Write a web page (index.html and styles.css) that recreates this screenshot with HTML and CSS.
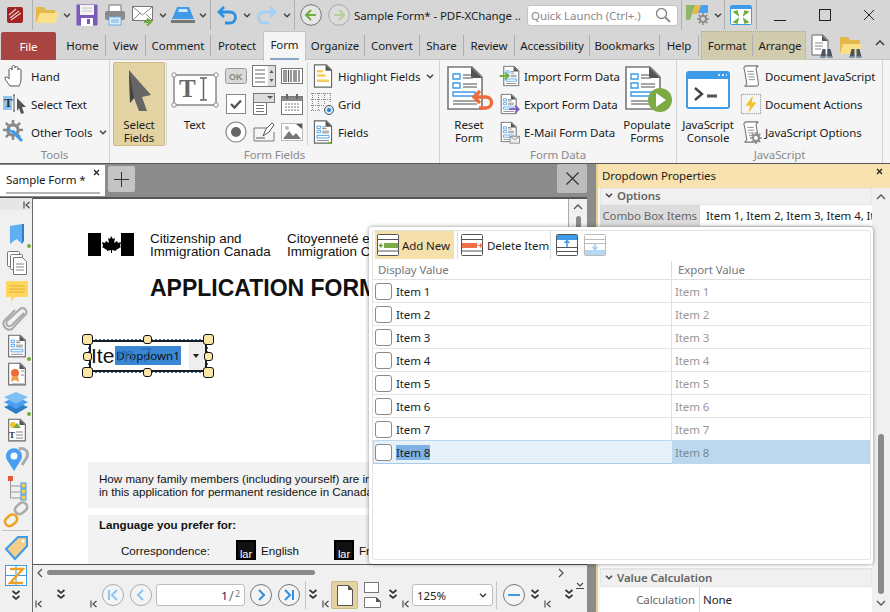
FILE: index.html
```html
<!DOCTYPE html>
<html lang="en">
<head>
    <meta charset="UTF-8">
    <title>Sample Form* - PDF-XChange Editor</title>
    <link rel="stylesheet" href="styles.css">
</head>
<body>
<svg class="defs">
    <symbol id="chev" viewBox="0 0 8 5"><path d="M1 .8 4 3.8 7 .8" fill="none" stroke="#444" stroke-width="1.5"/></symbol>
    <symbol id="dbl" viewBox="0 0 10 12"><path d="M1.5 1 5 4 8.5 1M1.5 6 5 9 8.5 6" fill="none" stroke="#333" stroke-width="1.7"/></symbol>
    <symbol id="end" viewBox="0 0 8 8"><path d="M1 .5v7M6.5 1 3 4l3.5 3" fill="none" stroke="#444" stroke-width="1.1"/></symbol>
    <symbol id="doc" viewBox="0 0 24 28"><path d="M2 1h14l6 6v20H2z" fill="#fff" stroke="#666" stroke-width="1.3"/><path d="M15 1v7h7z" fill="#555"/></symbol>
    <symbol id="form" viewBox="0 0 24 28"><use href="#doc"/><path d="M5 7h4v3H5zM5 12h4v3H5z" fill="#fff" stroke="#3d9be9"/><path d="M5 18h14v3H5z" fill="#fff" stroke="#3d9be9"/><path d="M11 8h4M11 10h5M11 13h8M11 15h8M5 24h14" stroke="#777"/></symbol>
    <symbol id="bigform" viewBox="0 0 36 44"><path d="M1 1h24l10 10v32H1z" fill="#fff" stroke="#777" stroke-width="1.6"/><path d="M24 1v11h11z" fill="#555"/><path d="M6 8h7v5H6zM6 17h7v5H6zM6 26h22v4H6z" fill="#fff" stroke="#3d9be9" stroke-width="1.4"/><path d="M16 9h8M16 12h10M16 18h14M16 21h14M6 35h24M6 38h24" stroke="#888" stroke-width="1.3"/></symbol>
    <symbol id="gear" viewBox="0 0 14 14"><circle cx="7" cy="7" r="3.6" fill="none" stroke="#8a8a8a" stroke-width="2.2"/><path d="M7 0v3M7 11v3M0 7h3M11 7h3M2 2l2 2M10 10l2 2M12 2l-2 2M4 10l-2 2" stroke="#8a8a8a" stroke-width="1.8"/></symbol>
    <symbol id="scroll" viewBox="0 0 24 26"><path d="M6 2h14c-2 1-3 3-2 6l2 12c1 3-1 4-3 4H5c2-1 3-2 2-5L5 7C4 5 4 3 6 2z" fill="#fff" stroke="#777" stroke-width="1.2"/><path d="M8 8h7M8.500 11h7M9 14h7M9.500 17h7" stroke="#888"/></symbol>
    <symbol id="binoc" viewBox="0 0 14 11"><path d="M1 10 3 2h3v8zM8 10V2h3l2 8z" fill="#4a5560"/><path d="M1 10h5M8 10h5" stroke="#7a8fa0" stroke-width="2"/></symbol>
</svg>

<div class="app">
    <!-- Title bar -->
    <div class="titlebar">
        <span class="qa-app"><svg width="16" height="16" viewBox="0 0 16 16"><rect width="16" height="16" rx="2" fill="#9e2524"/><path d="M3 11 12 4M4 13 14 6M2 8l7-6" stroke="#f3c9c9" stroke-width="1.2"/></svg></span>
        <span class="tb-sep m5"></span>
        <span class="qa"><svg width="24" height="20" viewBox="0 0 24 20"><path d="M1 18V2h8l2 3h9v13z" fill="#e4b84a"/><path d="M1 18 5 8h19l-4 10z" fill="#fbe08a"/></svg></span>
        <span class="caret"><svg width="8" height="5"><use href="#chev"/></svg></span>
        <span class="qa"><svg width="22" height="22" viewBox="0 0 22 22"><rect x=".5" y=".5" width="21" height="21" rx="1" fill="#7a5cb8" stroke="#a890d8" stroke-dasharray="1 1"/><rect x="4" y="1" width="14" height="10" fill="#f3f3f3"/><path d="M6 4h10M6 7h10" stroke="#c8c8c8"/><rect x="5" y="14" width="12" height="8" fill="#fff"/><rect x="11" y="15" width="3" height="5" fill="#7a5cb8"/></svg></span>
        <span class="qa"><svg width="22" height="22" viewBox="0 0 22 22"><rect x="5" y="1" width="12" height="7" fill="#fff" stroke="#777"/><rect x="1" y="7" width="20" height="9" rx="2" fill="#8a8a8a"/><rect x="5" y="13" width="12" height="8" fill="#dff0fb" stroke="#6aaee6"/><path d="M7 16h8M7 18h8" stroke="#6aaee6"/></svg></span>
        <span class="qa"><svg width="22" height="22" viewBox="0 0 22 22"><rect x=".5" y="2.500" width="20" height="14" fill="#fff" stroke="#777"/><path d="M1 3l9.500 8L20 3M1 16l7-7M20 16l-6-6" fill="none" stroke="#888"/><path d="M12 18h6M15 14.500l4 3.500-4 3.500" fill="none" stroke="#6fae3c" stroke-width="2"/></svg></span>
        <span class="caret"><svg width="8" height="5"><use href="#chev"/></svg></span>
        <span class="qa"><svg width="24" height="18" viewBox="0 0 24 18"><path d="M6 1h12l5 12H1z" fill="#3d9be9"/><path d="M8 3h8l1 3H7z" fill="#cfe7fb"/><rect y="14" width="24" height="3" fill="#777"/></svg></span>
        <span class="caret"><svg width="8" height="5"><use href="#chev"/></svg></span>
        <span class="tb-sep m1"></span>
        <span class="qa m2"><svg width="22" height="20" viewBox="0 0 22 20"><path d="M8 2 3 7l5 5M3 7h11a5 5 0 0 1 0 11H9" fill="none" stroke="#2f8fe0" stroke-width="2.800"/></svg></span>
        <span class="caret"><svg width="8" height="5"><use href="#chev"/></svg></span>
        <span class="qa"><svg width="22" height="20" viewBox="0 0 22 20"><path d="M14 2l5 5-5 5M19 7H8a5 5 0 0 0 0 11h5" fill="none" stroke="#a5d0f3" stroke-width="2.800"/></svg></span>
        <span class="caret"><svg width="8" height="5"><use href="#chev"/></svg></span>
        <span class="tb-sep m1"></span>
        <span class="qa m2"><svg width="22" height="22" viewBox="0 0 22 22"><circle cx="11" cy="11" r="10.300" fill="#e6e6e6" stroke="#777"/><path d="M11 6l-5 5 5 5M6 11h10" fill="none" stroke="#6fae3c" stroke-width="2"/></svg></span>
        <span class="qa"><svg width="22" height="22" viewBox="0 0 22 22"><circle cx="11" cy="11" r="10.300" fill="#dcdcdc" stroke="#aaa"/><path d="M11 6l5 5-5 5M6 11h10" fill="none" stroke="#b2d097" stroke-width="2"/></svg></span>
        <span class="doc-title">Sample Form* - PDF-XChange ..</span>
        <div class="quick">
            <span>Quick Launch (Ctrl+.)</span>
            <svg width="16" height="16" viewBox="0 0 16 16"><circle cx="6.500" cy="6.500" r="5" fill="none" stroke="#888" stroke-width="1.400"/><path d="M10 10l5 5" stroke="#888" stroke-width="1.800"/></svg>
        </div>
        <span class="tb-sep m3"></span>
        <span class="qa m2"><svg width="24" height="22" viewBox="0 0 24 22"><path d="M0 1h9L4 16H0z" fill="#8fb56a"/><path d="M9 1h6l-3 9H6z" fill="#e9b949"/><path d="M15 1h7v8H12z" fill="#4a9ff0"/><use href="#gear" x="11" y="9" width="12" height="12"/></svg></span>
        <span class="caret"><svg width="8" height="5"><use href="#chev"/></svg></span>
        <span class="tb-sep"></span>
        <span class="qa m2"><svg width="22" height="20" viewBox="0 0 22 20"><rect x=".5" y=".5" width="21" height="19" rx="1" fill="#fff" stroke="#3d9be9"/><path d="M1 1h20v3H1z" fill="#3d9be9"/><path d="M4 7l4 3-1-4zM18 7l-4 3 1-4zM4 17l4-3-1 4zM18 17l-4-3 1 4z" fill="#6fae3c" stroke="#6fae3c" stroke-width="1.500"/></svg></span>
        <span class="tb-sep m1"></span>
        <span class="win-btn"><svg width="12" height="12"><path d="M0 11.500h12" stroke="#222"/></svg></span>
        <span class="win-btn"><svg width="12" height="12"><rect x=".5" y=".5" width="11" height="11" fill="none" stroke="#222"/></svg></span>
        <span class="win-btn win-close"><svg width="12" height="12"><path d="M1 1l10 10M11 1 1 11" stroke="#222"/></svg></span>
    </div>

    <!-- Ribbon tabs -->
    <div class="tabs">
        <div class="file-tab">File</div>
        <div class="tab tab-home">Home</div>
        <div class="tab">View</div>
        <div class="tab">Comment</div>
        <div class="tab tab-plain">Protect</div>
        <div class="tab tab-active">Form</div>
        <div class="tab">Organize</div>
        <div class="tab">Convert</div>
        <div class="tab">Share</div>
        <div class="tab">Review</div>
        <div class="tab">Accessibility</div>
        <div class="tab">Bookmarks</div>
        <div class="tab">Help</div>
        <div class="context-tabs">
            <div class="tab">Format</div>
            <div class="tab tab-plain">Arrange</div>
        </div>
        <div class="tab-icon"><svg width="24" height="24" viewBox="0 0 24 24"><path d="M2 1h11l5 5v15H2z" fill="#fff" stroke="#666"/><path d="M12 1v6h6z" fill="#555"/><path d="M5 9h8M5 12h8M5 15h6" stroke="#888"/><use href="#binoc" x="9" y="13" width="15" height="11"/></svg></div>
        <div class="tab-icon"><svg width="24" height="24" viewBox="0 0 24 24"><path d="M1 20V3h8l2 3h10v14z" fill="#e4b84a"/><path d="M1 20 4 10h19l-3 10z" fill="#fbe08a"/><use href="#binoc" x="9" y="13" width="15" height="11"/></svg></div>
        <div class="tab-collapse"><svg width="10" height="6" viewBox="0 0 10 6"><path d="M1 5l4-4 4 4" fill="none" stroke="#333" stroke-width="1.400"/></svg></div>
    </div>

    <!-- Ribbon -->
    <div class="ribbon">
        <div class="group">
            <div class="group-body rb-col">
                <div class="rb-row"><svg width="24" height="24" viewBox="0 0 24 24"><path d="M7 22c-2-3-5-6-5-8 0-2 3-1 4 1V6c0-2 3-2 3 0V3c0-2 3-2 3 0v1c0-2 3-2 3 0v2c0-2 3-1 3 0v9c0 3-1 5-2 7z" fill="#fff" stroke="#555"/></svg><span>Hand</span></div>
                <div class="rb-row"><svg width="24" height="24" viewBox="0 0 24 24"><rect y="4" width="9" height="14" fill="#8cc6f2"/><text x="1" y="15" class="svg-serif">T</text><path d="M10 3h2M11 3v16M10 19h2" stroke="#555"/><path d="M14 6l9 9h-4l2 6-3 1-2-6-2 3z" fill="#555"/></svg><span>Select Text</span></div>
                <div class="rb-row"><svg width="24" height="24" viewBox="0 0 24 24"><use href="#gear" x="0" y="0" width="20" height="20"/><path d="M7 6a3 3 0 0 0 4 4l9 10-2 2L8 12a3 3 0 0 1-3-4z" fill="#3d9be9"/></svg><span>Other Tools</span><svg class="rb-caret" width="8" height="5"><use href="#chev"/></svg></div>
            </div>
            <div class="group-label">Tools</div>
        </div>
        <div class="group">
            <div class="group-body">
                <div class="select-fields">
                    <div class="big-icon"><svg width="26" height="44" viewBox="0 0 26 44"><path d="M3 1 25 26 16 28 21 42 13 42 8 29 4 34z" fill="#666"/><path d="M3 1 8 29 4 34z" fill="#444"/></svg></div>
                    <div class="big-label">Select<br>Fields</div>
                </div>
                <div class="big-btn big-text">
                    <div class="big-icon"><svg width="48" height="36" viewBox="0 0 48 36"><rect x="3" y="3" width="42" height="30" fill="#fff" stroke="#888" stroke-width="1.500"/><circle cx="3" cy="3" r="2.200" fill="#fff" stroke="#888"/><circle cx="45" cy="3" r="2.200" fill="#fff" stroke="#888"/><circle cx="3" cy="33" r="2.200" fill="#fff" stroke="#888"/><circle cx="45" cy="33" r="2.200" fill="#fff" stroke="#888"/><text x="8" y="25" class="svg-t">T</text><path d="M29 6h7M32.500 6v22M29 28h7" stroke="#666" stroke-width="1.500" fill="none"/></svg></div>
                    <div class="big-label">Text</div>
                </div>
                <div class="tool-grid">
                    <span><svg width="22" height="16" viewBox="0 0 22 16"><rect x=".5" y=".5" width="21" height="15" rx="2" fill="#d8d8d8" stroke="#999"/><text x="4" y="12" class="svg-ok">OK</text></svg></span>
                    <span><svg width="24" height="22" viewBox="0 0 24 22"><rect x=".5" y=".5" width="23" height="21" fill="#fff" stroke="#777"/><rect x="16" y="1" width="7" height="20" fill="#ddd"/><path d="M3 5h10M3 9h10M3 13h10M3 17h10" stroke="#666"/><path d="M17.500 8l2-3 2 3zM17.500 14l2 3 2-3z" fill="#555"/></svg></span>
                    <span><svg width="22" height="16" viewBox="0 0 22 16"><rect x=".5" y=".5" width="21" height="15" fill="#fff" stroke="#777"/><path d="M3 2v12M5 2v12M7.500 2v12M10 2v12M13 2v12M15 2v12M18 2v12" stroke="#555" stroke-width="1.200"/></svg></span>
                    <span><svg width="20" height="20" viewBox="0 0 20 20"><rect x=".5" y=".5" width="19" height="19" fill="#fff" stroke="#888"/><path d="M5 10l3.500 3.500L15 6.500" fill="none" stroke="#555" stroke-width="2.400"/></svg></span>
                    <span><svg width="22" height="22" viewBox="0 0 22 22"><rect x=".5" y=".5" width="21" height="9" fill="#ddd" stroke="#777"/><path d="M14 3l3 3 3-3z" fill="#555"/><rect x=".5" y="9.500" width="13" height="12" fill="#fff" stroke="#777"/><path d="M3 12.500h8M3 15.500h8M3 18.500h8" stroke="#777"/></svg></span>
                    <span><svg width="22" height="22" viewBox="0 0 22 22"><rect x=".5" y="3.500" width="21" height="18" fill="#fff" stroke="#777"/><rect x="1" y="4" width="20" height="4" fill="#888"/><path d="M6 1v5M16 1v5" stroke="#666" stroke-width="2"/><path d="M4 11h14M4 14h14M4 17h14" stroke="#777" stroke-dasharray="2 1"/></svg></span>
                    <span><svg width="22" height="22" viewBox="0 0 22 22"><circle cx="11" cy="11" r="10" fill="#fff" stroke="#888" stroke-width="1.200"/><circle cx="11" cy="11" r="5" fill="#666"/></svg></span>
                    <span><svg width="22" height="20" viewBox="0 0 22 20"><path d="M1 6h14M1 6v13h20V10" fill="none" stroke="#777"/><path d="M3 16h9" stroke="#555"/><path d="M10 14l3-7 6-6 2 2-5 7z" fill="#fff" stroke="#555"/></svg></span>
                    <span><svg width="22" height="18" viewBox="0 0 22 18"><rect x=".5" y=".5" width="21" height="17" fill="#fff" stroke="#bbb"/><path d="M2 16l6-8 4 5 3-3 5 6z" fill="#777"/><circle cx="6" cy="5" r="2" fill="#bbb"/><path d="M15 1h6v5z" fill="#555"/></svg></span>
                </div>
                <div class="rb-col fields-col">
                    <div class="rb-row"><svg width="24" height="24" viewBox="0 0 24 28"><use href="#doc"/><path d="M5 7h7v3H5zM5 12h10v3H5zM5 18h14v3H5z" fill="#f5cd5a"/></svg><span>Highlight Fields</span><svg class="rb-caret" width="8" height="5"><use href="#chev"/></svg></div>
                    <div class="rb-row"><svg width="24" height="24" viewBox="0 0 24 24"><path d="M1.500 1v17M7.500 1v17M13.500 1v12M19.500 1v10M0 1.500h20M0 7.500h20M0 13.500h14M0 18.500h9" stroke="#888" stroke-dasharray="1 1"/><circle cx="18" cy="18" r="4.500" fill="#cfe7fb" stroke="#555"/><circle cx="18" cy="18" r="2" fill="#2f7fc8"/></svg><span>Grid</span></div>
                    <div class="rb-row"><svg width="24" height="24" viewBox="0 0 24 28"><use href="#form"/><circle cx="20" cy="27" r="2" fill="#6fae3c"/></svg><span>Fields</span></div>
                </div>
            </div>
            <div class="group-label">Form Fields</div>
        </div>
        <div class="group">
            <div class="group-body">
                <div class="big-btn big-58">
                    <div class="big-icon"><svg width="48" height="48" viewBox="0 0 48 48"><use href="#bigform" width="36" height="44"/><path d="M33 25l-6 6 6 6M27 31h12a5 5 0 0 1 0 11h-7" fill="none" stroke="#f06a3c" stroke-width="3.400"/></svg></div>
                    <div class="big-label">Reset<br>Form</div>
                </div>
                <div class="rb-col data-col">
                    <div class="rb-row"><svg width="24" height="24" viewBox="0 0 24 28"><use href="#form" x="3" width="21"/><path d="M0 14h9M6 10l4 4-4 4" fill="none" stroke="#6fae3c" stroke-width="2.200"/></svg><span>Import Form Data</span></div>
                    <div class="rb-row"><svg width="24" height="24" viewBox="0 0 24 28"><use href="#form" width="21"/><path d="M11 20h11M18 16l4 4-4 4" fill="none" stroke="#7a5cb8" stroke-width="2.200"/></svg><span>Export Form Data</span></div>
                    <div class="rb-row"><svg width="24" height="24" viewBox="0 0 24 28"><use href="#form" width="21"/><rect x="12" y="19" width="11" height="8" fill="#eee" stroke="#888"/><path d="M12 19l5.500 4 5.500-4" fill="none" stroke="#888"/></svg><span>E-Mail Form Data</span></div>
                </div>
                <div class="big-btn big-58">
                    <div class="big-icon"><svg width="48" height="48" viewBox="0 0 48 48"><use href="#bigform" width="36" height="44"/><circle cx="35" cy="34" r="12" fill="#7cab45"/><path d="M31 27l10 7-10 7z" fill="#fff"/></svg></div>
                    <div class="big-label">Populate<br>Forms</div>
                </div>
            </div>
            <div class="group-label">Form Data</div>
        </div>
        <div class="group">
            <div class="group-body">
                <div class="big-btn big-62">
                    <div class="big-icon"><svg width="44" height="38" viewBox="0 0 44 38"><rect x="1" y="1" width="42" height="36" rx="2" fill="#fff" stroke="#3d9be9" stroke-width="2"/><path d="M1 1h42v7H1z" fill="#3d9be9"/><path d="M32 4h2M36 4h2M40 4h1" stroke="#fff" stroke-width="1.500"/><path d="M9 17l7 6-7 6" fill="none" stroke="#444" stroke-width="2.400"/><path d="M21 25h10" stroke="#555" stroke-width="3"/></svg></div>
                    <div class="big-label">JavaScript<br>Console</div>
                </div>
                <div class="rb-col js-col">
                    <div class="rb-row"><svg width="22" height="24" viewBox="0 0 24 26"><use href="#scroll"/></svg><span>Document JavaScript</span></div>
                    <div class="rb-row"><svg width="22" height="24" viewBox="0 0 24 24"><rect x="1.500" y="1.500" width="21" height="21" fill="none" stroke="#777" stroke-dasharray="1 1"/><path d="M14 3 6 14h5l-2 8 9-12h-5z" fill="#f0c330"/></svg><span>Document Actions</span></div>
                    <div class="rb-row"><svg width="22" height="24" viewBox="0 0 24 26"><use href="#scroll"/><use href="#gear" x="11" y="13" width="13" height="13"/></svg><span>JavaScript Options</span></div>
                </div>
            </div>
            <div class="group-label">JavaScript</div>
        </div>
    </div>

    <!-- Main area -->
    <div class="main">
        <div class="workspace">
            <div class="doc-tabs">
                <div class="doc-tab">
                    <span>Sample Form *</span>
                    <svg width="7" height="7" viewBox="0 0 7 7"><path d="M1 1l5 5M6 1 1 6" stroke="#222" stroke-width="1.300"/></svg>
                </div>
                <div class="new-tab"><svg width="15" height="15"><path d="M7.500 0v15M0 7.500h15" stroke="#333"/></svg></div>
                <div class="close-doc"><svg width="13" height="13"><path d="M.5.500l12 12M12.500.5l-12 12" stroke="#333" stroke-width="1.200"/></svg></div>
            </div>
            <div class="doc-row">
                <div class="sidebar">
                    <div class="side-end"><svg width="8" height="8"><use href="#end"/></svg></div>
                    <div class="grip-h"></div>
                    <div class="side-item"><svg width="30" height="28" viewBox="0 0 30 28"><path d="M9 5l12-2v20l-5.500-5L9 23z" fill="#62aef2"/><path d="M21 3h2v17l-2 3z" fill="#2f7fc8"/><circle cx="28" cy="25" r="2" fill="#6fae3c"/></svg></div>
                    <div class="side-item"><svg width="30" height="28" viewBox="0 0 30 28"><rect x="6.500" y="2.500" width="12" height="15" rx="1" fill="#fff" stroke="#777"/><rect x="9.500" y="5.500" width="12" height="15" rx="1" fill="#fff" stroke="#777"/><path d="M12.500 8.500h9l4 4v13h-13z" fill="#fff" stroke="#777"/><path d="M15 15h8M15 18h8M15 21h8" stroke="#888"/></svg></div>
                    <div class="side-item"><svg width="30" height="28" viewBox="0 0 30 28"><path d="M5 4h22v16H14l-4 5v-5H5z" fill="#ffd75e"/><path d="M8 9h16M8 12h16M8 15h16" stroke="#e2ae30"/></svg></div>
                    <div class="side-item"><svg width="30" height="28" viewBox="0 0 30 28"><path d="M23 8 11 20a3 3 0 0 1-5-4L19 4a4 4 0 0 1 6 5L11 24a6 6 0 0 1-8-8L14 5" fill="none" stroke="#a8a8a8" stroke-width="2"/></svg></div>
                    <div class="side-item"><svg width="30" height="28" viewBox="0 0 30 28"><use href="#form" x="6" width="20" height="26"/><circle cx="28" cy="26" r="2" fill="#6fae3c"/></svg></div>
                    <div class="side-item"><svg width="30" height="28" viewBox="0 0 30 28"><use href="#doc" x="6" width="20" height="26"/><circle cx="14" cy="12" r="4" fill="#f06a3c"/><path d="M11 15l-1 6 4-2 4 2-1-6" fill="#f2a050"/><path d="M20 10h3M20 14h3M11 23h12" stroke="#888"/></svg></div>
                    <div class="side-item"><svg width="30" height="28" viewBox="0 0 30 28"><path d="M15 13 27 18 15 25 3 18z" fill="#2f7fc8"/><path d="M15 8 27 13 15 20 3 13z" fill="#4a9ff0"/><path d="M15 3 27 8 15 15 3 8z" fill="#7ec0f5"/><circle cx="28" cy="25" r="2" fill="#6fae3c"/></svg></div>
                    <div class="side-item"><svg width="30" height="28" viewBox="0 0 30 28"><use href="#doc" x="6" width="20" height="26"/><circle cx="12" cy="8" r="3" fill="#f0c330"/><path d="M12 11l4-5 4 5z" fill="#7cab45"/><text x="8" y="21" class="svg-tiny">T</text><path d="M15 15h7M15 18h7M15 21h7" stroke="#888"/></svg></div>
                    <div class="side-item"><svg width="30" height="28" viewBox="0 0 30 28"><path d="M18 4c5-2 10 2 8 8l-5 8" fill="none" stroke="#aaa" stroke-width="3"/><path d="M13 26 6 15a8 8 0 1 1 14 0z" fill="#4a9ff0"/><circle cx="13" cy="11" r="3.500" fill="#fff"/></svg></div>
                    <div class="side-item"><svg width="30" height="28" viewBox="0 0 30 28"><rect x="7" y="3" width="5" height="5" fill="#e8553a"/><path d="M9.500 8v17M9.500 13H21M9.500 19H21M9.500 25H21" stroke="#999"/><rect x="20" y="10" width="5" height="5" fill="#f5cd5a" stroke="#3d9be9"/><rect x="20" y="16" width="5" height="5" fill="#f5cd5a" stroke="#3d9be9"/><rect x="20" y="22" width="5" height="5" fill="#f5cd5a" stroke="#3d9be9"/></svg></div>
                    <div class="side-item"><svg width="30" height="28" viewBox="0 0 30 28"><rect x="14" y="3" width="13" height="9" rx="4.500" transform="rotate(-40 20 8)" fill="none" stroke="#aaa" stroke-width="2.600"/><rect x="4" y="15" width="13" height="9" rx="4.500" transform="rotate(-40 10 20)" fill="none" stroke="#f0a020" stroke-width="2.600"/></svg></div>
                    <div class="side-sep"></div>
                    <div class="side-item"><svg width="30" height="28" viewBox="0 0 30 28"><path d="M5 15 17 3h9v9L14 25z" fill="#f5cd8a" stroke="#3d9be9" stroke-width="2"/><circle cx="22" cy="7" r="1.500" fill="#fff"/></svg></div>
                    <div class="side-item"><svg width="30" height="28" viewBox="0 0 30 28"><rect x="4.500" y="3.500" width="21" height="20" fill="#fff" stroke="#3d9be9"/><path d="M15 4v19M4 13.500h22" stroke="#3d9be9"/><path d="M9 7h13L9 21h13" fill="none" stroke="#f0a020" stroke-width="2.400"/></svg></div>
                    <div class="side-dbl"><svg width="10" height="12"><use href="#dbl"/></svg></div>
                </div>
                <div class="doc-col">
                    <div class="page-row">
                        <div class="page">
                            <div class="page-head">
                                <div class="flag"><span class="flag-bar"></span><svg width="20" height="23" viewBox="0 0 20 23"><path d="M10 3l2 3 2-1-1 5 3-2 1 2 3-1-1 4 1 1-5 3v1l-4-1v3H10v-3l-4 1v-1l-5-3 1-1-1-4 3 1 1-2 3 2-1-5 2 1z" fill="#000"/></svg><span class="flag-bar"></span></div>
                                <div class="org org-en">Citizenship and<br>Immigration Canada</div>
                                <div class="org">Citoyenneté et<br>Immigration Canada</div>
                            </div>
                            <h1 class="form-title">APPLICATION FORM</h1>
                            <div class="widget">
                                <span class="widget-text">Ite</span>
                                <span class="widget-name">Dropdown1</span>
                                <span class="widget-arrow"></span>
                                <i class="handle h-tl"></i><i class="handle h-tm"></i><i class="handle h-tr"></i>
                                <i class="handle h-ml"></i><i class="handle h-mr"></i>
                                <i class="handle h-bl"></i><i class="handle h-bm"></i><i class="handle h-br"></i>
                            </div>
                            <div class="pdf-block pdf-question">How many family members (including yourself) are included<br>in this application for permanent residence in Canada?</div>
                            <div class="pdf-block pdf-lang">
                                <div class="lang-title">Language you prefer for:</div>
                                <div class="lang-row">
                                    <span class="lang-name">Correspondence:</span>
                                    <span class="lar">lar</span><span class="lang-opt">English</span>
                                    <span class="lar">lar</span><span class="lang-opt">French</span>
                                </div>
                            </div>
                        </div>
                        <div class="vscroll">
                            <svg width="10" height="6" viewBox="0 0 10 6"><path d="M1 5l4-4 4 4" fill="none" stroke="#555" stroke-width="1.300"/></svg>
                            <div class="vthumb"></div>
                        </div>
                    </div>
                    <div class="hscroll">
                        <svg width="6" height="10" viewBox="0 0 6 10"><path d="M5 1 1 5l4 4" fill="none" stroke="#555" stroke-width="1.300"/></svg>
                        <div class="hthumb"></div>
                        <svg class="hs-right" width="6" height="10" viewBox="0 0 6 10"><path d="M1 1l4 4-4 4" fill="none" stroke="#555" stroke-width="1.300"/></svg>
                    </div>
                    <div class="status">
                        <div class="grip m1"><i></i><svg width="8" height="8"><use href="#end"/></svg></div>
                        <span class="st-dbl m12"><svg width="10" height="12"><use href="#dbl"/></svg></span>
                        <div class="grip m22"><i></i><svg width="8" height="8"><use href="#end"/></svg></div>
                        <span class="nav m3"><svg width="22" height="22" viewBox="0 0 22 22"><circle cx="11" cy="11" r="10.500" fill="#f4f4f4" stroke="#aaa"/><path d="M7 6v10M15 6l-5 5 5 5" fill="none" stroke="#8cc6f2" stroke-width="2"/></svg></span>
                        <span class="nav m4"><svg width="22" height="22" viewBox="0 0 22 22"><circle cx="11" cy="11" r="10.500" fill="#f4f4f4" stroke="#aaa"/><path d="M13 6l-5 5 5 5" fill="none" stroke="#8cc6f2" stroke-width="2"/></svg></span>
                        <div class="page-input m3"><b>1</b><em>/</em><small>2</small></div>
                        <span class="nav m4"><svg width="22" height="22" viewBox="0 0 22 22"><circle cx="11" cy="11" r="10.500" fill="#f4f4f4" stroke="#777"/><path d="M9 6l5 5-5 5" fill="none" stroke="#2f8fe0" stroke-width="2"/></svg></span>
                        <span class="nav m4"><svg width="22" height="22" viewBox="0 0 22 22"><circle cx="11" cy="11" r="10.500" fill="#f4f4f4" stroke="#777"/><path d="M15 6v10M7 6l5 5-5 5" fill="none" stroke="#2f8fe0" stroke-width="2"/></svg></span>
                        <span class="st-sep m4"></span>
                        <span class="st-dbl m1"><svg width="10" height="12"><use href="#dbl"/></svg></span>
                        <div class="grip m2"><i></i><svg width="8" height="8"><use href="#end"/></svg></div>
                        <span class="page-btn m1"><svg width="16" height="21" viewBox="0 0 16 21"><path d="M.5.500h11l4 4v16H.5z" fill="#fff" stroke="#555"/><path d="M11 0v5h5z" fill="#555"/></svg></span>
                        <span class="nav-18 m6"><svg width="18" height="26" viewBox="0 0 18 26"><rect x=".5" y=".5" width="14" height="10" fill="#fff" stroke="#777"/><path d="M.5 15.500h12l4 4v6H.5z" fill="#fff" stroke="#777"/><path d="M12 15v5h5z" fill="#555"/></svg></span>
                        <span class="st-dbl m5"><svg width="10" height="12"><use href="#dbl"/></svg></span>
                        <div class="grip m2"><i></i><svg width="8" height="8"><use href="#end"/></svg></div>
                        <div class="zoom-select m2"><span>125%</span><svg width="8" height="5"><use href="#chev"/></svg></div>
                        <span class="st-sep m3"></span>
                        <span class="nav m5"><svg width="22" height="22" viewBox="0 0 22 22"><circle cx="11" cy="11" r="10.500" fill="#f6f6f6" stroke="#777"/><path d="M5 11h12" stroke="#3d9be9" stroke-width="2"/></svg></span>
                        <span class="st-dbl m3"><svg width="10" height="12"><use href="#dbl"/></svg></span>
                        <div class="grip m2"><i></i><svg width="8" height="8"><use href="#end"/></svg></div>
                        <span class="st-dbl m11"><svg width="10" height="12"><use href="#dbl"/></svg></span>
                        <span class="st-more"><svg width="8" height="8" viewBox="0 0 8 8"><path d="M1 1l3 3 3-3M0 6.500h8" fill="none" stroke="#444" stroke-width="1.100"/></svg></span>
                    </div>
                </div>
            </div>
        </div>

        <!-- Properties pane -->
        <div class="panel">
            <div class="panel-head">
                <span>Dropdown Properties</span>
                <svg width="7" height="7" viewBox="0 0 7 7"><path d="M1 1l5 5M6 1 1 6" stroke="#222" stroke-width="1.300"/></svg>
            </div>
            <div class="panel-body">
                <div class="props">
                    <div class="prop-section prop-top"><svg width="8" height="5"><use href="#chev"/></svg><span>Options</span></div>
                    <div class="prop-row prop-row-active"><span class="prop-name">Combo Box Items</span><span class="prop-value">Item 1, Item 2, Item 3, Item 4, Item 5</span></div>
                    <div class="prop-fill"></div>
                    <div class="prop-section"><svg width="8" height="5"><use href="#chev"/></svg><span>Value Calculation</span></div>
                    <div class="prop-row prop-row-last"><span class="prop-name">Calculation</span><span class="prop-value">None</span></div>
                </div>
                <div class="panel-scroll">
                    <svg width="10" height="6" viewBox="0 0 10 6"><path d="M1 5l4-4 4 4" fill="none" stroke="#555" stroke-width="1.300"/></svg>
                    <div class="panel-thumb"></div>
                    <svg width="10" height="6" viewBox="0 0 10 6"><path d="M1 1l4 4 4-4" fill="none" stroke="#555" stroke-width="1.300"/></svg>
                </div>
            </div>
        </div>
    </div>

    <!-- Combo box items popup -->
    <div class="popup">
        <div class="popup-inner">
            <div class="popup-tools">
                <div class="tool tool-hover"><svg width="22" height="22" viewBox="0 0 22 22"><rect x=".5" y=".5" width="21" height="21" rx="1" fill="#fff" stroke="#555"/><path d="M1 5.500h20M1 17h20" stroke="#555"/><rect x="7" y="9" width="14" height="5" fill="#7cab45"/><path d="M2 11.500h4M4.500 9.500l-2 2 2 2" fill="none" stroke="#5e9a30" stroke-width="1.200"/></svg><span>Add New</span></div>
                <div class="tool-sep"></div>
                <div class="tool tool-delete"><svg width="22" height="22" viewBox="0 0 22 22"><rect x=".5" y=".5" width="21" height="21" rx="1" fill="#fff" stroke="#555"/><path d="M1 5.500h20M1 17h20" stroke="#555"/><rect x="1" y="9" width="15" height="5" fill="#f0704a"/><path d="M16 11.500h5M19 9.500l2 2-2 2" fill="none" stroke="#f0704a" stroke-width="1.200"/></svg><span>Delete Item</span></div>
                <div class="tool-sep"></div>
                <div class="tool tool-icon"><svg width="22" height="22" viewBox="0 0 22 22"><rect x=".5" y=".5" width="21" height="21" rx="1" fill="#fff" stroke="#555"/><rect x="1" y="1" width="20" height="5" fill="#3d9be9"/><path d="M1 13.500h20M1 17.500h20" stroke="#555"/><path d="M11 13V7M8.500 9 11 6.500 13.500 9" fill="none" stroke="#3d9be9" stroke-width="1.500"/></svg></div>
                <div class="tool tool-icon tool-gap"><svg width="22" height="22" viewBox="0 0 22 22"><rect x=".5" y=".5" width="21" height="21" rx="1" fill="#fff" stroke="#bbb"/><rect x="1" y="16" width="20" height="5" fill="#b5d8f5"/><path d="M1 5.500h20M1 9.500h20" stroke="#bbb"/><path d="M11 9v6M8.500 13l2.500 2.500 2.500-2.500" fill="none" stroke="#9cc9ef" stroke-width="1.500"/></svg></div>
            </div>
            <div class="list-head"><span>Display Value</span><span>Export Value</span></div>
            <div class="list-row"><div class="cell-main"><i class="check"></i><span>Item 1</span></div><div class="cell-export">Item 1</div></div>
            <div class="list-row"><div class="cell-main"><i class="check"></i><span>Item 2</span></div><div class="cell-export">Item 2</div></div>
            <div class="list-row"><div class="cell-main"><i class="check"></i><span>Item 3</span></div><div class="cell-export">Item 3</div></div>
            <div class="list-row"><div class="cell-main"><i class="check"></i><span>Item 4</span></div><div class="cell-export">Item 4</div></div>
            <div class="list-row"><div class="cell-main"><i class="check"></i><span>Item 5</span></div><div class="cell-export">Item 5</div></div>
            <div class="list-row"><div class="cell-main"><i class="check"></i><span>Item 6</span></div><div class="cell-export">Item 6</div></div>
            <div class="list-row"><div class="cell-main"><i class="check"></i><span>Item 7</span></div><div class="cell-export">Item 7</div></div>
            <div class="list-row row-selected"><div class="cell-main"><i class="check"></i><span class="sel-text">Item 8</span></div><div class="cell-export">Item 8</div></div>
        </div>
    </div>
</div>
</body>
</html>
```

FILE: styles.css
```css
* {
    box-sizing: border-box;
}

body {
    margin: 0;
    font-family: "Noto Sans", "Open Sans", sans-serif;
    font-size: 11.5px;
    letter-spacing: -0.1px;
    color: #1c1c1c;
}

svg {
    display: block;
    flex: none;
}

.defs {
    display: none;
}

.app {
    position: relative;
    width: 890px;
    height: 612px;
    overflow: hidden;
    display: flex;
    flex-direction: column;
    background-color: #d6d6d6;
}

.m1 { margin-left: 1px; }
.m2 { margin-left: 2px; }
.m3 { margin-left: 3px; }
.m4 { margin-left: 4px; }
.m5 { margin-left: 5px; }
.m6 { margin-left: 6px; }
.m11 { margin-left: 11px; }
.m12 { margin-left: 12px; }
.m22 { margin-left: 22px; }

/* Title bar */
.titlebar {
    height: 30px;
    flex: none;
    display: flex;
    align-items: center;
}

.qa-app {
    margin-left: 7px;
    width: 20px;
}

.qa {
    width: 28px;
    height: 24px;
    display: flex;
    align-items: center;
    justify-content: center;
}

.caret {
    width: 12px;
    display: flex;
    justify-content: center;
}

.tb-sep {
    width: 1px;
    height: 30px;
    background-color: #b0b0b0;
}

.doc-title {
    margin-left: 1px;
    width: 173px;
    white-space: nowrap;
    overflow: hidden;
}

.quick {
    width: 151px;
    height: 21px;
    padding: 0 6px 0 3px;
    display: flex;
    align-items: center;
    justify-content: space-between;
    background-color: #fff;
    border: 1px solid #c4c4c4;
    border-radius: 3px;
    color: #8a8a8a;
}

.win-btn {
    width: 45px;
    display: flex;
    justify-content: center;
}

.win-close {
    width: 43px;
}

/* Ribbon tabs */
.tabs {
    height: 30px;
    flex: none;
    display: grid;
    grid-template-columns: 60px 46px 40px 65px 52px 43px 59px 55px 44px 51px 75px 70px 39px 2px 105px 31px 28px 1fr;
    border-bottom: 1px solid #c4c4c4;
}

.file-tab {
    margin: 2px 4px 0 1px;
    display: flex;
    align-items: center;
    justify-content: center;
    background-color: #a84543;
    border-radius: 2px 2px 0 0;
    color: #fff;
}

.tab {
    height: 21px;
    margin-top: 5px;
    display: flex;
    align-items: center;
    justify-content: center;
    border-right: 1px solid #aeaeae;
}

.tab-plain {
    border-right: none;
}

.tab-active {
    position: relative;
    z-index: 1;
    height: 30px;
    margin-top: 1px;
    padding-bottom: 5px;
    padding-top: 1px;
    background-color: #f5f5f5;
    border: 1px solid #c4c4c4;
    border-bottom: none;
    border-radius: 2px 2px 0 0;
}

.tab-active::after {
    content: "";
    position: absolute;
    left: 6px;
    right: 6px;
    bottom: 1px;
    height: 2px;
    background-color: #8ba5c6;
}

.context-tabs {
    grid-column: 15;
    display: grid;
    grid-template-columns: 51px 54px;
    background-color: #d2ccaf;
    border: 1px dotted #c2a96c;
    margin-top: 1px;
    border-bottom: none;
}

.context-tabs .tab {
    margin-top: 3px;
}

.tab-icon {
    display: flex;
    align-items: center;
    justify-content: center;
}

.tab-collapse {
    display: flex;
    align-items: center;
    justify-content: flex-end;
    padding: 0 5px 6px 0;
}

/* Ribbon */
.ribbon {
    height: 104px;
    flex: none;
    display: grid;
    grid-template-columns: 110px 330px 237px 206px 1fr;
    background-color: #f5f5f5;
    border-bottom: 1px solid #585858;
}

.group {
    display: flex;
    flex-direction: column;
    border-right: 1px solid #d4d4d4;
}

.group-body {
    flex: 1;
    display: flex;
    padding-top: 2px;
}

.group-label {
    height: 16px;
    text-align: center;
    color: #8a8a8a;
    line-height: 16px;
}

.rb-col {
    display: flex;
    flex-direction: column;
}

.rb-row {
    height: 28px;
    display: flex;
    align-items: center;
    gap: 4px;
    padding-left: 3px;
    white-space: nowrap;
}

.rb-caret {
    margin-left: 3px;
}

.select-fields {
    width: 52px;
    height: 84px;
    margin: 0 0 0 3px;
    background-color: #e3d2a2;
    border: 1px solid #cdb984;
    border-radius: 2px;
}

.big-icon {
    height: 55px;
    display: flex;
    align-items: center;
    justify-content: center;
}

.big-btn .big-icon {
    height: 56px;
}

.big-label {
    text-align: center;
    line-height: 13px;
}

.big-text {
    width: 56px;
    margin-left: 1px;
    border-left: 1px solid #d4d4d4;
    height: 84px;
}

.big-58 {
    width: 58px;
}

.big-58 .big-icon {
    padding-left: 4px;
}

.big-62 {
    width: 62px;
}

.tool-grid {
    width: 84px;
    display: grid;
    grid-template-columns: repeat(3, 28px);
    grid-template-rows: repeat(3, 28px);
}

.tool-grid span {
    display: flex;
    align-items: center;
    justify-content: center;
}

.fields-col {
    margin-left: 1px;
    height: 84px;
    border-left: 1px solid #d4d4d4;
}

.fields-col .rb-row {
    gap: 3px;
}

.data-col {
    width: 120px;
}

.data-col .rb-row {
    padding-left: 0;
    gap: 2px;
}

.js-col .rb-row {
    padding-left: 1px;
    gap: 3px;
}

/* Workspace */
.main {
    flex: 1;
    min-height: 0;
    display: flex;
}

.workspace {
    width: 596px;
    background: repeating-conic-gradient(#858585 0 25%, #929292 0 50%) 0 0 / 2px 2px;
}

.doc-tabs {
    height: 33px;
    display: flex;
    align-items: flex-start;
    width: 587px;
}

.doc-tab {
    position: relative;
    width: 105px;
    height: 31px;
    margin-top: 1px;
    padding: 4px 5px 0 6px;
    display: flex;
    justify-content: space-between;
    background-color: #fff;
}

.doc-tab span {
    margin-top: 3px;
}

.doc-tab::after {
    content: "";
    position: absolute;
    left: 6px;
    right: 5px;
    bottom: 2px;
    height: 2px;
    background-color: #b5b5b5;
}

.new-tab {
    width: 27px;
    height: 26px;
    margin: 2px 0 0 3px;
    display: flex;
    align-items: center;
    justify-content: center;
    background-color: #c4c4c4;
    border-radius: 2px;
}

.close-doc {
    width: 30px;
    height: 29px;
    margin-left: auto;
    display: flex;
    align-items: center;
    justify-content: center;
    background-color: #bcbcbc;
    border-radius: 2px;
}

.doc-row {
    width: 587px;
    height: 415px;
    display: flex;
}

.sidebar {
    width: 33px;
    flex: none;
    display: flex;
    flex-direction: column;
    align-items: center;
    background-color: #f0f0f0;
    border-right: 1px solid #6a6a6a;
}

.side-end {
    width: 100%;
    height: 13px;
    flex: none;
    padding: 3px 0 0 23px;
    background-color: #e6e6e6;
    border-top: 1px solid #555;
}

.grip-h {
    width: 26px;
    height: 9px;
    flex: none;
    margin-bottom: 2px;
    background: radial-gradient(#aaa 40%, transparent 45%) 0 0 / 2px 2px;
}

.side-item {
    height: 28px;
    flex: none;
}

.side-sep {
    width: 28px;
    height: 1px;
    flex: none;
    margin: 1px 0 3px;
    background-color: #c4c4c4;
}

.side-dbl {
    flex: none;
}

.doc-col {
    flex: 1;
    min-width: 0;
    display: flex;
    flex-direction: column;
}

.page-row {
    height: 368px;
    flex: none;
    display: flex;
    border-top: 2px solid #555;
    border-bottom: 1px solid #555;
    background-color: #f0f0f0;
}

.page {
    position: relative;
    width: 536px;
    overflow: hidden;
    background-color: #fff;
    border-right: 1px solid #aaa;
    font-family: "Liberation Sans", Arial, sans-serif;
    letter-spacing: 0;
    color: #111;
}

.page-head {
    margin: 34px 0 0 55px;
    display: flex;
}

.flag {
    width: 46px;
    height: 23px;
    display: flex;
}

.flag-bar {
    width: 13px;
    background-color: #000;
}

.org {
    margin: -1px 0 0 16px;
    font-size: 13.4px;
    line-height: 13px;
    white-space: nowrap;
}

.org-en {
    width: 121px;
}

.form-title {
    margin: 15px 0 0 117px;
    font-size: 23px;
    line-height: 30px;
    white-space: nowrap;
}

/* Selected dropdown on the page */
.widget {
    position: absolute;
    left: 55px;
    top: 140px;
    width: 120px;
    height: 34px;
    background-color: #fff;
    border: 2px dotted #2f6fb5;
    outline: 2px solid #1d1d1d;
    outline-offset: -3px;
}

.widget-text {
    position: absolute;
    left: 1px;
    top: 3px;
    font-size: 21px;
    line-height: 24px;
}

.widget-name {
    position: absolute;
    left: 25px;
    top: 5px;
    width: 66px;
    height: 19px;
    background-color: #3b87d3;
    color: #111;
    font-family: "Noto Sans", sans-serif;
    line-height: 19px;
    text-align: center;
}

/* the old value still shows through the field's name */
.widget-name::before {
    content: "m 7";
    position: absolute;
    left: 2px;
    top: -3px;
    color: #2a6db5;
    font-family: "Liberation Sans", sans-serif;
    font-size: 21px;
    line-height: 24px;
    white-space: nowrap;
}

.widget-arrow {
    position: absolute;
    right: 1px;
    top: 1px;
    width: 16px;
    height: 28px;
    background-color: #eee;
}

.widget-arrow::after {
    content: "";
    position: absolute;
    left: 4px;
    top: 12px;
    border: 3.500px solid transparent;
    border-top: 4px solid #222;
    border-bottom: none;
}

.handle {
    position: absolute;
    width: 9px;
    height: 9px;
    background-color: #fde6a8;
    border: 1px solid #111;
    border-radius: 3px;
}

.h-tl, .h-tr, .h-bl, .h-br {
    width: 11px;
    height: 11px;
}

.h-tl { left: -8px; top: -7px; }
.h-tm { left: 53px; top: -6px; }
.h-tr { right: -8px; top: -7px; }
.h-ml { left: -7px; top: 11px; }
.h-mr { right: -7px; top: 11px; }
.h-bl { left: -8px; bottom: -7px; }
.h-bm { left: 53px; bottom: -6px; }
.h-br { right: -8px; bottom: -7px; }

.pdf-block {
    position: absolute;
    left: 55px;
    width: 481px;
    background-color: #f2f2f2;
    white-space: nowrap;
    font-size: 11.6px;
    line-height: 13px;
}

.pdf-question {
    top: 263px;
    height: 46px;
    padding: 10px 0 0 11px;
}

.pdf-lang {
    top: 316px;
    height: 50px;
    padding: 3px 0 0 11px;
}

.lang-title {
    font-weight: bold;
}

.lang-row {
    margin-top: 9px;
    display: flex;
    align-items: center;
}

.lang-name {
    width: 115px;
    margin-left: 22px;
}

.lar {
    width: 20px;
    height: 20px;
    padding-top: 6px;
    background-color: #111;
    border: 2px solid #000;
    color: #fff;
    font-size: 11px;
    line-height: 12px;
    text-align: center;
}

.lang-opt {
    width: 73px;
    margin-left: 5px;
}

.vscroll {
    flex: 1;
    display: flex;
    flex-direction: column;
    align-items: center;
    padding-top: 5px;
}

.vthumb {
    width: 5px;
    height: 120px;
    margin-top: 6px;
    background-color: #8a8a8a;
    border-radius: 3px;
}

.hscroll {
    height: 15px;
    flex: none;
    display: flex;
    align-items: center;
    padding: 0 0 0 4px;
    background-color: #f0f0f0;
}

.hthumb {
    width: 268px;
    height: 5px;
    margin-left: 4px;
    background-color: #8a8a8a;
    border-radius: 3px;
}

.hs-right {
    margin-left: 243px;
}

/* Bottom toolbar */
.status {
    flex: 1;
    display: flex;
    align-items: center;
    padding-bottom: 2px;
    background-color: #f0f0f0;
}

.grip {
    width: 9px;
    display: flex;
    flex-direction: column;
    align-items: center;
    gap: 2px;
}

.grip i {
    width: 9px;
    height: 16px;
    background: radial-gradient(#aaa 40%, transparent 45%) 0 0 / 2px 2px;
}

.st-dbl {
    width: 12px;
    display: flex;
    justify-content: center;
}

.nav {
    width: 24px;
    display: flex;
    justify-content: center;
}

.page-input {
    width: 89px;
    height: 22px;
    padding-right: 4px;
    display: flex;
    align-items: center;
    justify-content: flex-end;
    background-color: #fff;
    border: 1px solid #bdbdbd;
    border-radius: 3px;
}

.page-input b {
    font-weight: normal;
    color: #301050;
}

.page-input em {
    margin: 0 1px;
    font-style: normal;
    font-size: 14px;
    color: #777;
}

.page-input small {
    font-size: 9px;
    color: #777;
    margin-bottom: 4px;
}

.st-sep {
    width: 1px;
    height: 28px;
    background-color: #c4c4c4;
}

.page-btn {
    width: 27px;
    height: 28px;
    display: flex;
    align-items: center;
    justify-content: center;
    background-color: #e3d2a2;
    border: 1px solid #cdb984;
    border-radius: 2px;
}

.nav-18 {
    width: 18px;
}

.zoom-select {
    width: 81px;
    height: 22px;
    padding: 0 5px 0 4px;
    display: flex;
    align-items: center;
    justify-content: space-between;
    background-color: #fff;
    border: 1px solid #bdbdbd;
    border-radius: 3px;
}

.st-more {
    margin: 0 0 18px 1px;
}

/* Properties pane */
.panel {
    flex: 1;
    display: flex;
    flex-direction: column;
    padding-left: 2px;
    background-color: #f5f5f5;
    box-shadow: inset 2px 0 0 #e9cf96;
}

.panel-head {
    height: 24px;
    flex: none;
    padding: 0 7px 1px 4px;
    display: flex;
    align-items: center;
    justify-content: space-between;
    background-color: #f8e2b0;
}

.panel-head svg {
    margin-bottom: 9px;
}

.panel-body {
    flex: 1;
    min-height: 0;
    display: flex;
}

.props {
    flex: 1;
    min-width: 0;
    display: flex;
    flex-direction: column;
    margin-left: 2px;
    background-color: #fff;
}

.prop-section {
    height: 18px;
    flex: none;
    padding: 0 0 1px 4px;
    display: flex;
    align-items: center;
    gap: 4px;
    background-color: #f0f0f0;
    border: 1px solid #e6e6e6;
    color: #666;
    font-weight: 600;
}

.prop-top {
    height: 17px;
    padding-bottom: 2px;
}

.prop-row {
    height: 22px;
    flex: none;
    display: grid;
    grid-template-columns: 100px 1fr;
    border-bottom: 1px solid #e4e4e4;
}

.prop-row-last {
    height: 25px;
    border-bottom: none;
}

.prop-name {
    padding-right: 4px;
    text-align: right;
    line-height: 22px;
    color: #666;
    border-right: 1px solid #d4d4d4;
    white-space: nowrap;
}

.prop-row-last .prop-name,
.prop-row-last .prop-value {
    line-height: 25px;
}

.prop-row-active .prop-name {
    padding-right: 2px;
    background-color: #dcdcdc;
}

.prop-value {
    padding-left: 3px;
    line-height: 22px;
    white-space: nowrap;
    overflow: hidden;
}

.prop-row-active .prop-value {
    padding-left: 6px;
}

.prop-fill {
    flex: 1;
    border-bottom: 1px solid #e4e4e4;
}

.panel-scroll {
    width: 18px;
    flex: none;
    display: flex;
    flex-direction: column;
    align-items: center;
    justify-content: space-between;
    padding: 6px 0 6px;
    background-color: #f0f0f0;
}

.panel-thumb {
    width: 6px;
    height: 160px;
    margin-top: auto;
    margin-bottom: 6px;
    background-color: #8a8a8a;
    border-radius: 3px;
}

/* Popup */
.popup {
    position: absolute;
    left: 369px;
    top: 227px;
    width: 504px;
    height: 337px;
    padding: 3px 2px 4px 3px;
    background-color: #fff;
    border-radius: 4px;
    box-shadow: 0 0 4px rgba(0, 0, 0, 0.45);
}

.popup-inner {
    height: 100%;
    border: 1px solid #e4e4e4;
    border-top: none;
    border-radius: 3px;
    background-color: #fff;
}

.popup-tools {
    height: 29px;
    display: flex;
    align-items: center;
    border-top: 1px solid #e4e4e4;
    border-radius: 3px 3px 0 0;
}

.tool {
    height: 28px;
    padding: 0 3px;
    display: flex;
    align-items: center;
    gap: 4px;
    white-space: nowrap;
}

.tool-hover {
    width: 79px;
    margin-left: 2px;
    padding-left: 2px;
    gap: 3px;
    background-color: #f5e0ab;
}

.tool-delete {
    width: 89px;
}

.tool-sep {
    width: 1px;
    height: 28px;
    margin-left: 3px;
    background-color: #dcdcdc;
}

.tool-icon {
    margin-left: 5px;
    padding: 0;
}

.tool-gap {
    margin-left: 6px;
}

.list-head {
    height: 19px;
    display: grid;
    grid-template-columns: 298px 1fr;
    margin-top: 2px;
    border-bottom: 1px solid #e0e0e0;
    color: #777;
    line-height: 18px;
}

.list-head span {
    padding-left: 5px;
}

.list-head span + span {
    padding-left: 6px;
    border-left: 1px solid #dcdcdc;
}

.list-row {
    height: 23px;
    display: grid;
    grid-template-columns: 298px 1fr;
    border-bottom: 1px solid #e4e4e4;
}

.cell-main {
    padding-left: 2px;
    display: flex;
    align-items: center;
    gap: 4px;
}

.check {
    width: 17px;
    height: 17px;
    background-color: #fff;
    border: 1px solid #8a8a8a;
    border-radius: 3px;
}

.cell-export {
    padding-left: 3px;
    line-height: 23px;
    color: #999;
    border-left: 1px solid #e0e0e0;
}

.row-selected {
    margin-top: -1px;
    height: 24px;
    border: 1px solid #bcd8ef;
    border-bottom: 1px solid #a9cbe8;
    background-color: #e6f1fa;
}

.row-selected .cell-main {
    padding-left: 1px;
}

.row-selected .cell-export {
    background-color: #bcd8ef;
    border-left: none;
    color: #7d8a96;
}

.sel-text {
    background-color: #7fb1e3;
}

.svg-serif {
    font: bold 13px "Liberation Serif", serif;
    fill: #333;
}

.svg-t {
    font: bold 25px "Liberation Serif", serif;
    fill: #666;
}

.svg-ok {
    font: bold 9px "Liberation Sans", sans-serif;
    fill: #888;
}

.svg-tiny {
    font: bold 9px "Liberation Serif", serif;
    fill: #333;
}
```
